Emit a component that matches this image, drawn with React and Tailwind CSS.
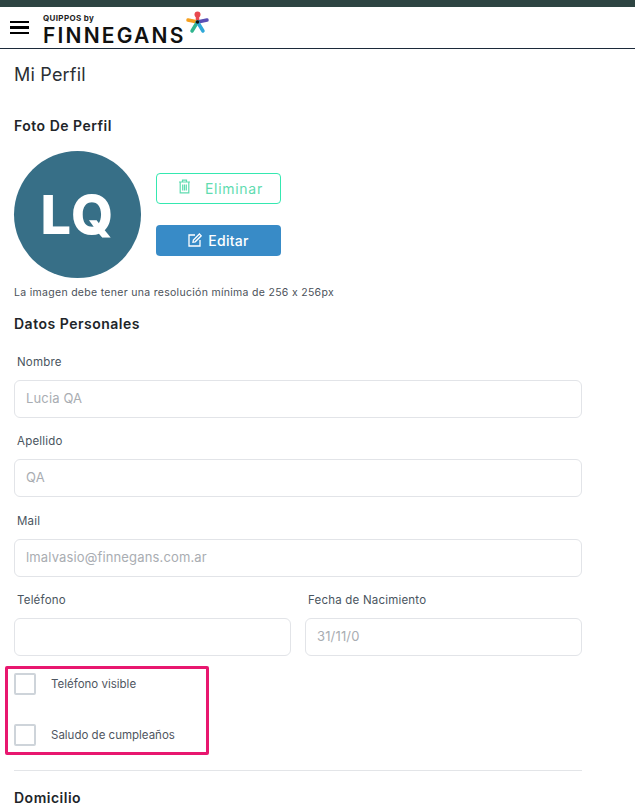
import React from "react";

const font = { fontFamily: "Inter, 'Open Sans', sans-serif" };

function Field({ label, value, className = "" }) {
  return (
    <div className={`flex flex-col ${className}`}>
      <label className="h-[23px] pl-[3px] text-[11.5px] leading-[23px] tracking-[0.2px] text-[#4a5560]">{label}</label>
      <div className="mt-[6px] flex h-[38px] items-center rounded-[6px] border border-[#e2e4e8] bg-white px-[11px] text-[13px] tracking-[0.15px] text-[#a9adb2]">
        {value}
      </div>
    </div>
  );
}

function Check({ label }) {
  return (
    <div className="flex h-[22px] items-center">
      <div className="h-[22px] w-[22px] rounded-[2px] border-2 border-[#ced4da] bg-white" />
      <span className="ml-[15px] mt-[1px] text-[11.5px] text-[#4f5661]">{label}</span>
    </div>
  );
}

function Logo() {
  return (
    <div className="relative ml-[14px] h-[40px] w-[170px]">
      <div className="absolute left-0 top-[5px] text-[8px] font-bold leading-[10px] tracking-[0.35px] text-[#222]">QUIPPOS by</div>
      <div className="absolute left-0 top-[15px] text-[21px] font-semibold leading-[26px] tracking-[2.2px] text-[#111]">FINNEGANS</div>
      <svg className="absolute left-[142px] top-[3px]" width="26" height="26" viewBox="0 0 26 26">
        <path d="M12.5 11 L12.5 3" stroke="#e8484f" strokeWidth="3.5" strokeLinecap="round" />
        <circle cx="12.5" cy="3.5" r="3" fill="#e8484f" />
        <path d="M12.5 11 L3 9" stroke="#f5a020" strokeWidth="3.5" strokeLinecap="round" />
        <path d="M12.5 11 L22 9" stroke="#5a4fb5" strokeWidth="3.5" strokeLinecap="round" />
        <path d="M12.5 11 L7 20" stroke="#2fb58f" strokeWidth="3.5" strokeLinecap="round" />
        <path d="M12.5 11 L18 20" stroke="#2fa8d8" strokeWidth="3.5" strokeLinecap="round" />
        <circle cx="12.5" cy="11" r="1.8" fill="#111" />
      </svg>
    </div>
  );
}

export default function App() {
  return (
    <div className="h-[806px] w-[635px] overflow-hidden bg-white" style={font}>
      <div className="h-[7px] bg-[#2d4442]" />
      <header className="flex h-[42px] items-center border-b border-[#1c2a3a] bg-white pl-[10px]">
        <div className="flex w-[19px] flex-col gap-[3px]">
          <div className="h-[2.5px] bg-black" />
          <div className="h-[2.5px] bg-black" />
          <div className="h-[2.5px] bg-black" />
        </div>
        <Logo />
      </header>

      <main className="ml-[14px] w-[568px]">
        <h1 className="mt-[14px] text-[18px] font-normal leading-[24px] tracking-[0.2px] text-[#2b2f33]">Mi Perfil</h1>
        <h2 className="mt-[29px] text-[14px] font-semibold leading-[20px] tracking-[0.5px] text-[#212529]">Foto De Perfil</h2>

        <div className="mt-[15px] flex items-center">
          <div className="flex h-[127px] w-[127px] items-center justify-center rounded-full bg-[#376f87] text-[54px] font-extrabold tracking-[1.5px] text-white">
            LQ
          </div>
          <div className="ml-[15px] flex flex-col gap-[21px]">
            <button className="flex h-[31px] w-[125px] items-center rounded-[4px] border border-[#35e8b0] bg-white pl-[21px] text-[14px] tracking-[0.7px] text-[#5fdcb0]">
              <svg width="13" height="15" viewBox="0 0 13 15" fill="none" stroke="#5fdcb0" strokeWidth="1.2" className="-mt-[4px]">
                <path d="M1 3h11M4.5 3V1.2h4V3M2.2 3v10.8h8.6V3M4.7 5.5v6M6.5 5.5v6M8.3 5.5v6" />
              </svg>
              <span className="ml-[14px]">Eliminar</span>
            </button>
            <button className="flex h-[31px] w-[125px] items-center justify-center rounded-[4px] bg-[#388bc7] text-[14px] font-medium tracking-[0.3px] text-white">
              <svg width="14" height="14" viewBox="0 0 14 14" fill="none" stroke="white" strokeWidth="1.3" className="-mt-[2px]">
                <path d="M7 2H1v11h11V7" />
                <path d="M5 9.2 5.4 7 11.4 1l1.8 1.8-6 6z" />
              </svg>
              <span className="ml-[6px]">Editar</span>
            </button>
          </div>
        </div>

        <p className="mt-[7px] text-[10.5px] leading-[16px] tracking-[0.3px] text-[#4b5159]">La imagen debe tener una resolución mínima de 256 x 256px</p>
        <h2 className="mt-[13px] text-[14px] font-semibold leading-[20px] tracking-[0.5px] text-[#212529]">Datos Personales</h2>

        <div className="mt-[17px] flex flex-col gap-[12px]">
          <Field label="Nombre" value="Lucia QA" />
          <Field label="Apellido" value="QA" />
          <Field label="Mail" value="lmalvasio@finnegans.com.ar" className="mt-[1px]" />
          <div className="grid grid-cols-2 gap-[14px]">
            <Field label="Teléfono" value="" />
            <Field label="Fecha de Nacimiento" value="31/11/0" />
          </div>
        </div>

        <div className="-ml-[9px] mt-[10px] flex h-[89px] w-[204px] flex-col gap-[29px] rounded-[2px] border-[3px] border-[#e8176f] pl-[6px] pt-[4px]">
          <Check label="Teléfono visible" />
          <Check label="Saludo de cumpleaños" />
        </div>

        <div className="mt-[15px] h-px bg-[#e3e5e8]" />
        <h2 className="mt-[17px] text-[14px] font-semibold leading-[20px] tracking-[0.5px] text-[#212529]">Domicilio</h2>
      </main>
    </div>
  );
}
